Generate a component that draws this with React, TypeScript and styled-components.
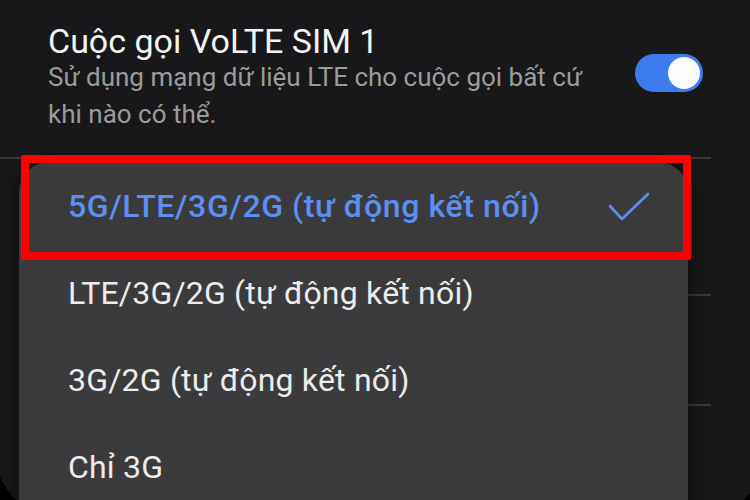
import React from "react";
import styled, { createGlobalStyle } from "styled-components";

const GlobalStyle = createGlobalStyle`
  html, body {
    margin: 0;
    padding: 0;
    background: #000;
    overflow: hidden;
  }
  body {
    font-family: Roboto, "Noto Sans", sans-serif;
  }
`;

const options = [
  "5G/LTE/3G/2G (tự động kết nối)",
  "LTE/3G/2G (tự động kết nối)",
  "3G/2G (tự động kết nối)",
  "Chỉ 3G",
];

export default function App() {
  return (
    <>
      <GlobalStyle />
      <Screen>
        <SettingRow>
          <SettingText>
            <SettingTitle>Cuộc gọi VoLTE SIM 1</SettingTitle>
            <SettingSub>
              Sử dụng mạng dữ liệu LTE cho cuộc gọi bất cứ khi nào có thể.
            </SettingSub>
          </SettingText>
          <Toggle>
            <Knob />
          </Toggle>
        </SettingRow>
        <BackRow $h={137} />
        <BackRow $h={110} />
        <BackRow $h={120} $last />

        <Menu>
          {options.map((o, i) => (
            <MenuItem key={o}>
              <ItemLabel $selected={i === 0}>{o}</ItemLabel>
              {i === 0 && (
                <svg width="42" height="30" viewBox="0 0 42 30">
                  <path
                    d="M2 14 L14 27 L40 2"
                    fill="none"
                    stroke="#5d8ff0"
                    strokeWidth="2.6"
                    strokeLinecap="round"
                    strokeLinejoin="round"
                  />
                </svg>
              )}
              {i === 0 && <Highlight />}
            </MenuItem>
          ))}
        </Menu>
      </Screen>
    </>
  );
}

const Screen = styled.div`
  position: relative;
  width: 770px;
  height: 520px;
  margin-left: -5px;
  background: #18181a;
  border-radius: 0 0 70px 70px;
  overflow: hidden;
  display: flex;
  flex-direction: column;
`;

const SettingRow = styled.div`
  flex: none;
  display: flex;
  align-items: flex-start;
  justify-content: space-between;
  padding: 21px 8px 0 53px;
  height: 136px;
  border-bottom: 2px solid #38383a;
  margin-right: 54px;
`;

const SettingText = styled.div`
  display: flex;
  flex-direction: column;
  width: 560px;
`;

const SettingTitle = styled.div`
  color: #f4f4f4;
  font-size: 34px;
  line-height: 40px;
`;

const SettingSub = styled.div`
  color: #9c9c9c;
  font-size: 26px;
  line-height: 37px;
  margin-top: -2px;
`;

const Toggle = styled.div`
  margin-top: 33px;
  width: 68px;
  height: 38px;
  border-radius: 19px;
  background: #3d7cf0;
  display: flex;
  align-items: center;
  justify-content: flex-end;
  padding: 0 3px;
  box-sizing: border-box;
`;

const Knob = styled.div`
  width: 32px;
  height: 32px;
  border-radius: 50%;
  background: #fbfbfd;
`;

const BackRow = styled.div<{ $h: number; $last?: boolean }>`
  height: ${(p) => p.$h}px;
  flex: none;
  margin: 0 54px 0 53px;
  border-bottom: ${(p) => (p.$last ? "none" : "2px solid #38383a")};
  box-sizing: border-box;
`;

const Menu = styled.div`
  position: absolute;
  left: 24px;
  top: 162px;
  width: 669px;
  height: 400px;
  background: #3b3b3d;
  border-radius: 30px 30px 0 0;
  box-shadow: 0 0 14px 4px rgba(0, 0, 0, 0.35);
  display: flex;
  flex-direction: column;
`;

const MenuItem = styled.div`
  position: relative;
  height: 87px;
  flex: none;
  display: flex;
  align-items: center;
  justify-content: space-between;
  padding: 0 38px 0 49px;

  svg {
    margin-top: 2px;
  }
`;

const ItemLabel = styled.span<{ $selected?: boolean }>`
  color: ${(p) => (p.$selected ? "#5d8ff0" : "#ececec")};
  font-size: 32px;
  letter-spacing: ${(p) => (p.$selected ? "0.6px" : "0.2px")};
  font-weight: ${(p) => (p.$selected ? 500 : 400)};
`;

const Highlight = styled.div`
  position: absolute;
  left: 2px;
  right: -3px;
  top: -7px;
  bottom: -11px;
  border: 8px solid #ff0000;
  border-radius: 2px;
  pointer-events: none;
`;
